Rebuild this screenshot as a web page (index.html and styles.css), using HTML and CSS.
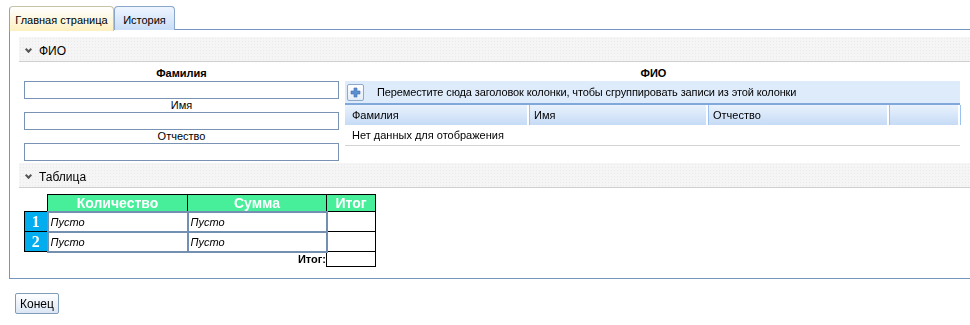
FILE: index.html
```html
<!DOCTYPE html>
<html lang="ru">
<head>
    <meta charset="UTF-8">
    <title>Главная страница</title>
    <link rel="stylesheet" href="styles.css">
</head>
<body>
    <div class="tabs">
        <div class="tab active">Главная страница</div>
        <div class="tab">История</div>
    </div>

    <div class="panel">
        <div class="group-head"><span class="chev"></span>ФИО</div>
        <div class="fio">
            <div class="fio-left">
                <div class="lbl bold">Фамилия</div>
                <input type="text" class="field" autofocus>
                <div class="lbl">Имя</div>
                <input type="text" class="field">
                <div class="lbl">Отчество</div>
                <input type="text" class="field">
            </div>
            <div class="fio-right">
                <div class="lbl bold">ФИО</div>
                <div class="grid">
                    <div class="grid-group">
                        <span class="plus-btn">
                            <svg width="11" height="11" viewBox="0 0 11 11"><path d="M4 1h3v3h3v3H7v3H4V7H1V4h3z" fill="#5b8fd0" stroke="#3d6fb0" stroke-width="0.6"/></svg>
                        </span>
                        Переместите сюда заголовок колонки, чтобы сгруппировать записи из этой колонки
                    </div>
                    <div class="grid-head">
                        <div class="col c1">Фамилия</div>
                        <div class="col c2">Имя</div>
                        <div class="col c3">Отчество</div>
                        <div class="col c4"></div>
                    </div>
                    <div class="grid-empty">Нет данных для отображения</div>
                </div>
            </div>
        </div>

        <div class="group-head"><span class="chev"></span>Таблица</div>
        <table class="calc">
            <tr>
                <td class="blank"></td>
                <th class="h-qty">Количество</th>
                <th class="h-sum">Сумма</th>
                <th class="h-tot">Итог</th>
            </tr>
            <tr>
                <td class="num">1</td>
                <td class="cell">Пусто</td>
                <td class="cell">Пусто</td>
                <td class="tot"></td>
            </tr>
            <tr>
                <td class="num">2</td>
                <td class="cell">Пусто</td>
                <td class="cell">Пусто</td>
                <td class="tot"></td>
            </tr>
            <tr>
                <td class="blank"></td>
                <td class="blank"></td>
                <td class="foot-lbl">Итог:</td>
                <td class="tot foot"></td>
            </tr>
        </table>
    </div>

    <button class="end-btn">Конец</button>
</body>
</html>
```

FILE: styles.css
```css
* {
    box-sizing: border-box;
}

body {
    margin: 0;
    padding: 6px 0 0 9px;
    font-family: "Liberation Sans", Arial, sans-serif;
    font-size: 11px;
    color: #000;
    background: #fff;
}

.tabs {
    display: flex;
    height: 23px;
}

.tab {
    width: 61px;
    height: 24px;
    padding: 7px 0 0 0;
    text-align: center;
    border: 1px solid #8aa6c8;
    border-bottom: none;
    border-radius: 4px 4px 0 0;
    background: linear-gradient(#eef5ff, #c9ddf7);
    position: relative;
    z-index: 1;
}

.tab.active {
    width: 105px;
    background: linear-gradient(#ffffff, #fdf0c0);
    border-color: #c9c3a5;
    border-left-color: #8aa6c8;
    height: 25px;
}

.panel {
    width: 962px;
    height: 250px;
    border: 1px solid #7495bd;
    padding: 7px 0 0 9px;
}

.group-head {
    height: 25px;
    padding: 4px 0 0 7px;
    font-size: 12px;
    background-color: #f5f5f5;
    background-image: radial-gradient(#eaeaea 0.6px, transparent 0.6px);
    background-size: 3px 3px;
    border-bottom: 1px solid #cfcfcf;
    display: flex;
    align-items: center;
    gap: 8px;
}

.chev {
    width: 5px;
    height: 5px;
    border-right: 2px solid #555;
    border-bottom: 2px solid #555;
    transform: rotate(45deg);
    margin-top: -4px;
}

.fio {
    display: flex;
    gap: 6px;
    padding: 4px 0 2px 5px;
}

.fio-left {
    width: 315px;
    display: flex;
    flex-direction: column;
}

.lbl {
    height: 13px;
    text-align: center;
    font-size: 11px;
    line-height: 13px;
}

.lbl.bold {
    font-weight: bold;
    height: 15px;
    line-height: 15px;
}

.field {
    height: 18px;
    margin: 0;
    border: 1px solid #7893b4;
    font: inherit;
    padding: 0 2px;
    outline: none;
}

.fio-right {
    width: 617px;
}

.grid {
    width: 615px;
}

.grid-group {
    height: 24px;
    background: #deebfa;
    border-bottom: 2px solid #80a8da;
    display: flex;
    align-items: center;
    gap: 13px;
    padding-left: 2px;
    letter-spacing: -0.12px;
}

.plus-btn {
    width: 17px;
    height: 17px;
    border: 1px solid #8ea8c9;
    border-radius: 2px;
    background: linear-gradient(#ffffff, #e2ecf8);
    display: flex;
    align-items: center;
    justify-content: center;
}

.grid-head {
    display: flex;
    height: 20px;
    background: linear-gradient(#e9f2fd, #c6dbf5);
}

.col {
    padding: 4px 0 0 5px;
    border-right: 2px solid #ffffff;
    box-shadow: 1px 0 0 #9cc3ef;
}

.c1 { width: 184px; padding-left: 7px; }
.c2 { width: 179px; }
.c3 { width: 181px; }
.c4 { width: 71px; }

.grid-empty {
    height: 21px;
    padding: 4px 0 0 7px;
    border-bottom: 1px solid #d3d3d3;
}

.calc {
    border-collapse: collapse;
    margin: 6px 0 0 5px;
}

.calc th {
    height: 17px;
    padding: 0;
    background: #47ef9b;
    color: #fff;
    font-size: 14px;
    font-weight: bold;
    border: 1px solid #000;
    line-height: 14px;
}

.h-qty { width: 140px; }
.h-sum { width: 139px; }
.h-tot { width: 49px; }

.calc td {
    padding: 0;
}

.blank {
    width: 23px;
    border: none;
}

.num {
    height: 20px;
    background: #00aeef;
    color: #fff;
    font-family: "Liberation Serif", "Times New Roman", serif;
    font-weight: bold;
    font-size: 16px;
    line-height: 16px;
    text-align: center;
    border: 1px solid #000;
}

.cell {
    border: 2px solid #7390b3;
    font-style: italic;
    padding-left: 2px !important;
    font-size: 11px;
    line-height: 14px;
}

.tot {
    border: 1px solid #000;
}

.foot-lbl {
    text-align: right;
    font-weight: bold;
    height: 15px;
    line-height: 13px;
}

.foot {
    height: 15px;
}

.end-btn {
    display: block;
    margin: 14px 0 0 6px;
    height: 21px;
    padding: 0 4px;
    font-family: "Liberation Sans", Arial, sans-serif;
    font-size: 12px;
    border: 1px solid #7f9db9;
    border-radius: 2px;
    background: linear-gradient(#ffffff, #dbe6f4);
    color: #000;
}
```
